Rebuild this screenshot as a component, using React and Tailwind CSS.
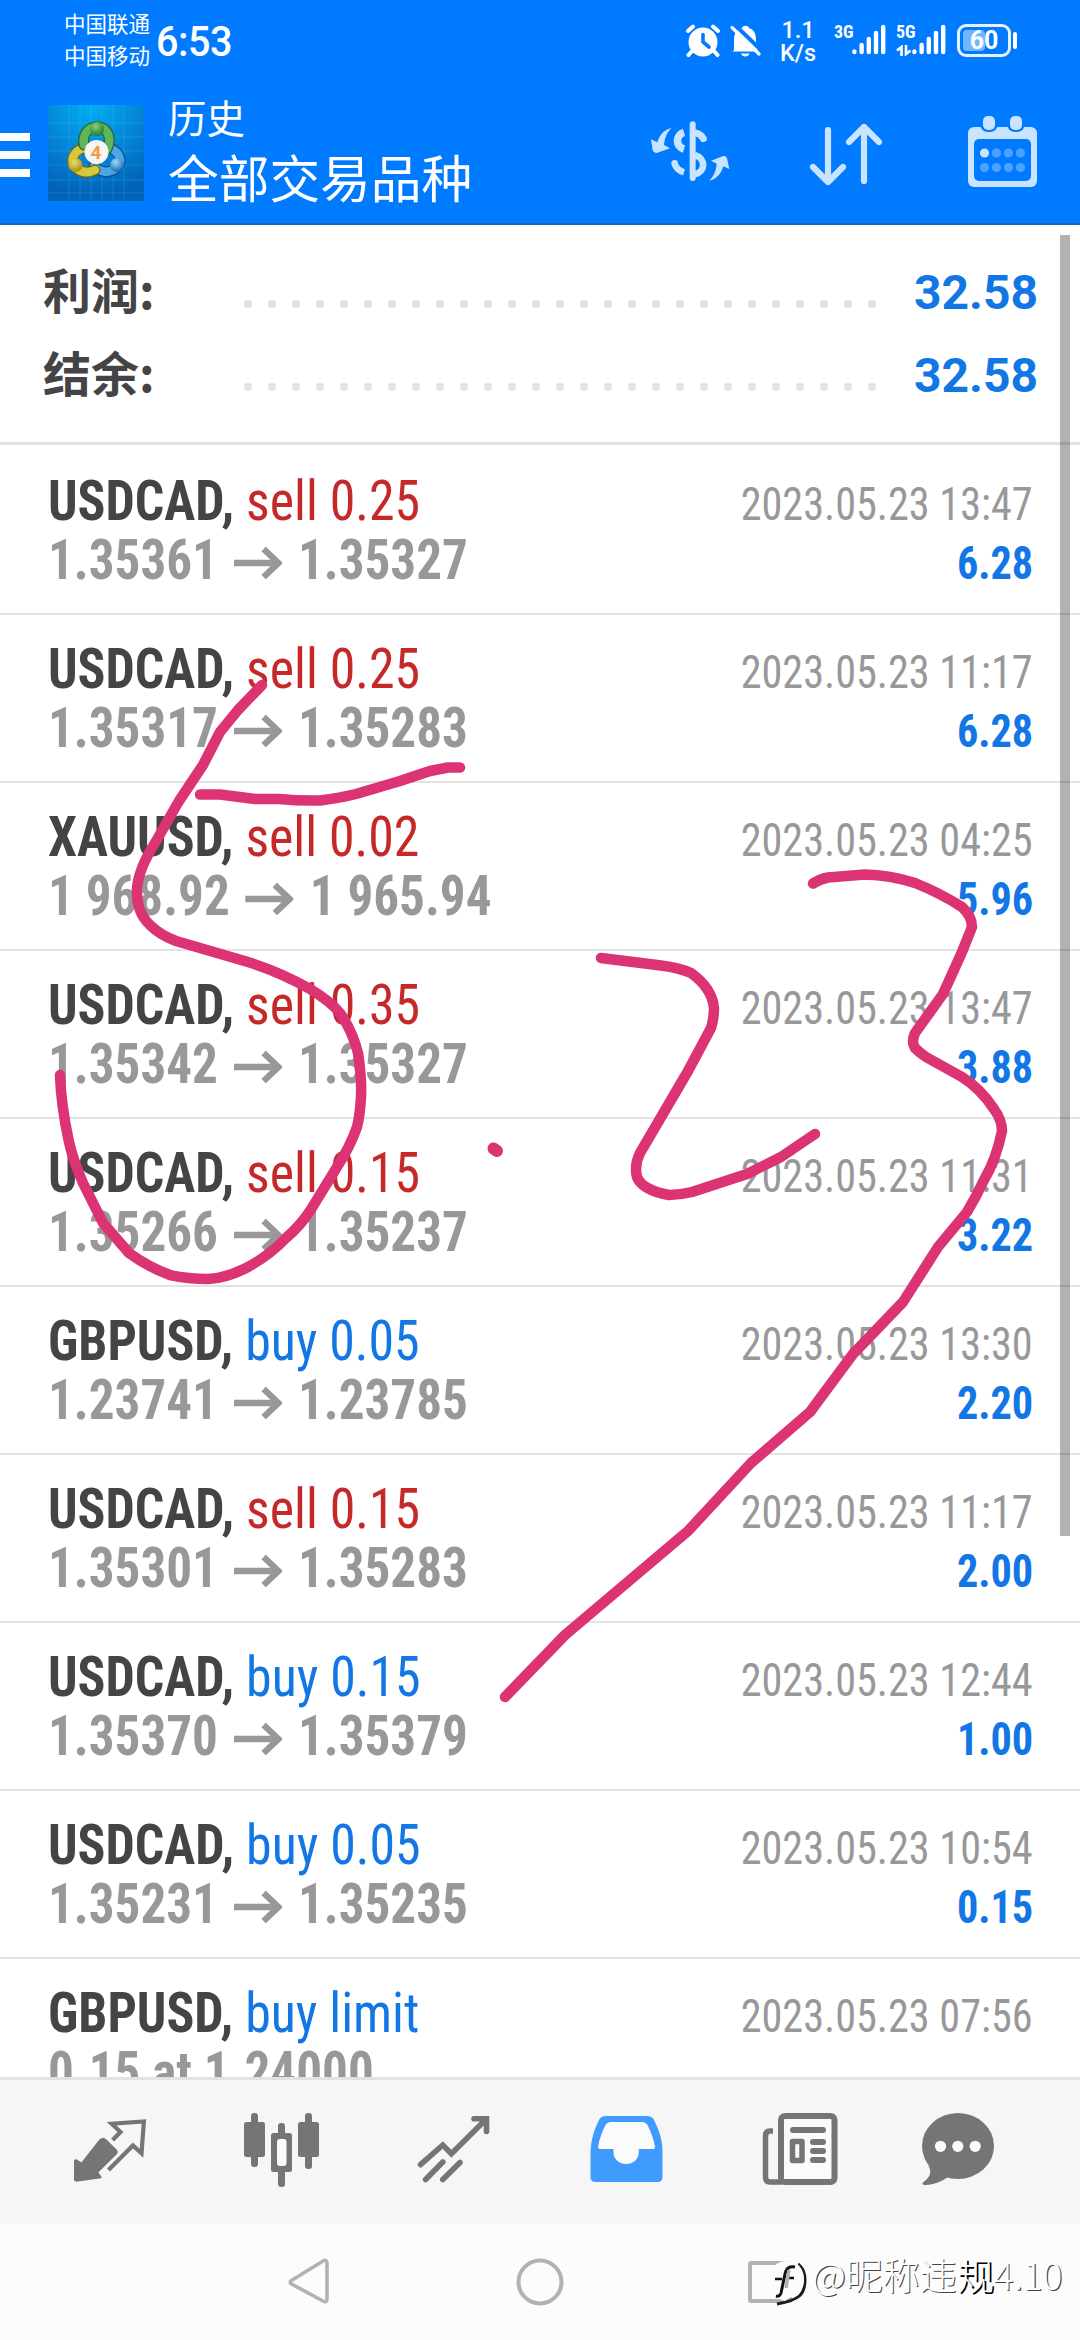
import React from "react";

const deals = [
  { symbol: "USDCAD", side: "sell", volume: "0.25", from: "1.35361", to: "1.35327", time: "2023.05.23 13:47", profit: "6.28" },
  { symbol: "USDCAD", side: "sell", volume: "0.25", from: "1.35317", to: "1.35283", time: "2023.05.23 11:17", profit: "6.28" },
  { symbol: "XAUUSD", side: "sell", volume: "0.02", from: "1 968.92", to: "1 965.94", time: "2023.05.23 04:25", profit: "5.96" },
  { symbol: "USDCAD", side: "sell", volume: "0.35", from: "1.35342", to: "1.35327", time: "2023.05.23 13:47", profit: "3.88" },
  { symbol: "USDCAD", side: "sell", volume: "0.15", from: "1.35266", to: "1.35237", time: "2023.05.23 11:31", profit: "3.22" },
  { symbol: "GBPUSD", side: "buy", volume: "0.05", from: "1.23741", to: "1.23785", time: "2023.05.23 13:30", profit: "2.20" },
  { symbol: "USDCAD", side: "sell", volume: "0.15", from: "1.35301", to: "1.35283", time: "2023.05.23 11:17", profit: "2.00" },
  { symbol: "USDCAD", side: "buy", volume: "0.15", from: "1.35370", to: "1.35379", time: "2023.05.23 12:44", profit: "1.00" },
  { symbol: "USDCAD", side: "buy", volume: "0.05", from: "1.35231", to: "1.35235", time: "2023.05.23 10:54", profit: "0.15" },
  { symbol: "GBPUSD", side: "buy", volume: "limit", note: "0.15 at 1.24000", time: "2023.05.23 07:56" },
];

const summary = [
  { label: "利润:", value: "32.58" },
  { label: "结余:", value: "32.58" },
];

function SignalBars() {
  return (
    <svg className="h-8 w-[34px]" viewBox="0 0 34 32" stroke="#fff" strokeWidth="4.4" strokeLinecap="round">
      <path d="M2.4 27.5v.5M9.6 21v7M16.8 15v13M24 9v19M31.2 3v25" />
    </svg>
  );
}

function StatusBar() {
  return (
    <div className="flex h-20 items-start pl-16 text-white">
      <div className="w-[88px] pt-[9px] text-[21.5px] leading-8 whitespace-nowrap">
        <div>中国联通</div>
        <div>中国移动</div>
      </div>
      <div className="ml-1 origin-left scale-x-[0.94] pt-[18px] text-[42px] leading-[48px] font-medium tracking-[-0.5px]">
        6:53
      </div>
      <div className="ml-auto flex h-20 pr-[63px]">
        <svg className="mt-6 h-[33px] w-[34px]" viewBox="0 0 34 33" fill="none">
          <circle cx="17" cy="18" r="14.5" fill="#fff" />
          <path d="M2 7 7 2.5M32 7l-5-4.500M6 27l-3.500 4M28 27l3.500 4" stroke="#fff" strokeWidth="4" strokeLinecap="round" />
          <path d="M17 10.500V18l6 5" stroke="#007aff" strokeWidth="3.600" strokeLinecap="round" />
        </svg>
        <svg className="mt-6 ml-2.5 h-[33px] w-[31px]" viewBox="0 0 31 33" fill="none">
          <path d="M4 26V16C4 9 7 5 12 4C13 1 18 1 19 4C24 6 26 9 26 16V22L28 26V27.500H2.500Z" fill="#fff" />
          <path d="M11 29.500h8.500c-1 4-7.500 4-8.500 0Z" fill="#fff" />
          <path d="m4 0 27 26" stroke="#007aff" strokeWidth="4" />
          <path d="m2 3.500 27 26.500" stroke="#fff" strokeWidth="3.200" strokeLinecap="round" />
        </svg>
        <div className="mt-[19px] ml-[18px] w-[38px] text-center text-[23.5px] leading-[23px] font-medium">
          <div>1.1</div>
          <div>K/s</div>
        </div>
        <div className="mt-6 ml-[17px] w-[19px] text-[18px] leading-[15px] font-[Roboto_Condensed] font-bold">
          3G
        </div>
        <div className="mt-6 -ml-px">
          <SignalBars />
        </div>
        <div className="mt-6 ml-2.5 w-4 text-[18px] leading-[15px] font-[Roboto_Condensed] font-bold">
          5G
          <svg className="mt-1.5 h-[11px] w-4" viewBox="0 0 16 11" fill="none" stroke="#fff" strokeWidth="2.600">
            <path d="M5.500 11V2L1 5.500M10 0v9l4.500-3.500" />
          </svg>
        </div>
        <div className="mt-6">
          <SignalBars />
        </div>
        <div className="relative mt-6 ml-[11px] flex h-[33px] w-[54px] items-center justify-center rounded-[9px] border-[3px] border-white/90">
          <span className="absolute top-[3px] left-[3px] h-[21px] w-[22px] rounded-sm bg-white/45" />
          <span className="relative text-[25px] leading-none font-bold">60</span>
        </div>
        <div className="mt-8 ml-0.5 h-[17px] w-1 rounded-full bg-white" />
      </div>
    </div>
  );
}

function AppLogo() {
  return (
    <svg className="h-24 w-24" viewBox="0 0 96 96" fill="none" strokeLinecap="round">
      <defs>
        <radialGradient id="sky" cx="45%" cy="0%" r="95%">
          <stop offset="0" stopColor="#00aef2" />
          <stop offset="0.55" stopColor="#0484d6" />
          <stop offset="1" stopColor="#0062b8" />
        </radialGradient>
        <radialGradient id="green" cx="40%" cy="30%" r="70%">
          <stop offset="0" stopColor="#8fcf72" />
          <stop offset="1" stopColor="#1f7c35" />
        </radialGradient>
        <radialGradient id="gold" cx="40%" cy="30%" r="70%">
          <stop offset="0" stopColor="#efe16a" />
          <stop offset="1" stopColor="#a88e10" />
        </radialGradient>
        <radialGradient id="blue" cx="40%" cy="30%" r="70%">
          <stop offset="0" stopColor="#9fdcfb" />
          <stop offset="1" stopColor="#1268b4" />
        </radialGradient>
      </defs>
      <path d="M0 0h96v96H0Z" fill="url(#sky)" />
      <path
        d="M21 0v96M32 0v96M43 0v96M54 0v96M65 0v96M76 0v96M0 18h96M0 32h96M0 46h96M0 60h96M0 75h96M0 88h96"
        stroke="#5cc8ff"
        strokeOpacity="0.22"
      />
      <path d="M62 43C73 48 75 58 68 63C60 69 52 67 46 61" stroke="#0d4f8c" strokeWidth="11" />
      <path d="M62 43C73 48 75 58 68 63C60 69 52 67 46 61" stroke="#4aa6e6" strokeWidth="8.500" />
      <path d="M36 43C25 46 21 56 28 63C34 68 41 68 47 65" stroke="#6f6a1c" strokeWidth="11" />
      <path d="M36 43C25 46 21 56 28 63C34 68 41 68 47 65" stroke="#d3c93c" strokeWidth="8.500" />
      <path d="M36 40C34 30 40 22 49 22C58 22 65 31 59 44" stroke="#1f6a33" strokeWidth="11" />
      <path d="M36 40C34 30 40 22 49 22C58 22 65 31 59 44" stroke="#62b45a" strokeWidth="8.500" />
      <circle cx="49" cy="24" r="7" fill="url(#green)" />
      <circle cx="27.500" cy="60" r="7" fill="url(#gold)" />
      <circle cx="69" cy="60" r="7" fill="url(#blue)" />
      <circle cx="48.500" cy="47" r="12" fill="#f7f5f2" />
      <text x="48" y="54" fontSize="19" fontWeight="700" fill="#ef9a4a" textAnchor="middle" fontFamily="Roboto">
        4
      </text>
    </svg>
  );
}

function AppBar() {
  return (
    <div className="flex h-[145px] items-start text-white">
      <div className="mt-[53px] flex w-[30px] flex-col gap-2.5">
        <span className="h-2 bg-white" />
        <span className="h-2 bg-white" />
        <span className="h-2 bg-white" />
      </div>
      <div className="mt-[25px] ml-[18px]">
        <AppLogo />
      </div>
      <div className="mt-[10px] ml-[24px] whitespace-nowrap">
        <div className="text-[38.5px] leading-[60px]">历史</div>
        <div className="text-[50.7px] leading-[62px]">全部交易品种</div>
      </div>
      <div className="ml-auto flex pr-[35px]">
        <svg className="mt-[25px] h-[90px] w-[110px]" viewBox="0 0 330 270" fill="none" stroke="#c8e4ff">
          <path d="M158 58V219" strokeWidth="18" strokeLinecap="round" />
          <path d="M132 82C106 90 106 124 132 132" strokeWidth="23" />
          <path d="M164 83C178 86 186 92 190 101" strokeWidth="21" strokeLinecap="round" />
          <path d="M164 150C198 160 198 200 164 208" strokeWidth="20" />
          <path d="M104 176C108 190 118 198 132 202" strokeWidth="20" />
          <circle cx="104" cy="175" r="5" strokeWidth="10" />
          <path d="M95 68C73 74 59 88 52 112L33 103 38 136Q41 145 50 144L90 130 72 120C74 98 81 82 95 68Z" fill="#c8e4ff" stroke="none" />
          <path d="M207 228C229 222 243 208 250 184L268 192 261 160Q258 151 250 153L213 167 230 176C228 198 221 214 207 228Z" fill="#c8e4ff" stroke="none" />
        </svg>
        <svg className="mt-[38px] ml-[55px] h-[70px] w-20" viewBox="0 0 80 70" fill="none" stroke="#c8e4ff" strokeWidth="6.200" strokeLinecap="round" strokeLinejoin="round">
          <path d="M23 12V63M8 49l15 15 15-15M59 63V9M44 24 59 9l15 15" />
        </svg>
        <svg className="mt-[34px] ml-[80px] h-[76px] w-20" viewBox="0 0 80 76" fill="none">
          <rect x="3" y="13" width="69" height="60" rx="6" fill="#c8e4ff" />
          <rect x="9" y="25" width="57" height="42" rx="5" fill="#007aff" />
          <rect x="15" y="-1" width="18" height="19" rx="8" fill="#007aff" />
          <rect x="42" y="-1" width="18" height="19" rx="8" fill="#007aff" />
          <rect x="18" y="2" width="12" height="14" rx="5" fill="#c8e4ff" />
          <rect x="45" y="2" width="12" height="14" rx="5" fill="#c8e4ff" />
          <circle cx="19.500" cy="39" r="4.600" fill="#c8e4ff" />
          <g fill="#4da2ff">
            <circle cx="31.500" cy="39" r="4.600" />
            <circle cx="43.500" cy="39" r="4.600" />
            <circle cx="55.500" cy="39" r="4.600" />
            <circle cx="19.500" cy="53.500" r="4.600" />
            <circle cx="31.500" cy="53.500" r="4.600" />
            <circle cx="43.500" cy="53.500" r="4.600" />
            <circle cx="55.500" cy="53.500" r="4.600" />
          </g>
        </svg>
      </div>
    </div>
  );
}

function SummaryRow({ label, value }) {
  return (
    <div className="flex h-[83px] items-center pr-[42px] pl-[43px] leading-[83px]">
      <div className="-mt-[7px] w-[201px] font-['Noto_Sans_CJK_SC',sans-serif] text-[48px] font-bold text-[#444446]">{label}</div>
      <div className="mt-[25px] flex w-[632px] justify-between">
        {Array.from({ length: 27 }, (_, i) => (
          <span key={i} className="size-2 rounded-full bg-[#e2e2e2]" />
        ))}
      </div>
      <div className="mt-0.5 ml-auto text-[48px] font-bold text-[#1277e4]">{value}</div>
    </div>
  );
}

function DealRow({ deal, first }) {
  return (
    <div
      className={`border-b-2 border-[#e2e2e2] pr-[47px] pl-12 whitespace-pre font-[Roboto_Condensed] text-[55px] leading-[59px] ${
        first ? "h-[170px] pt-[27px]" : "h-[168px] pt-[25px]"
      }`}
    >
      <div className="flex h-[59px] items-baseline justify-between">
        <div className="origin-left scale-x-[0.942]">
          <span className="font-bold text-[#444446]">{deal.symbol}, </span>
          <span className={deal.side === "sell" ? "font-[450] text-[#c62828]" : "font-[450] text-[#1277e4]"}>
            {deal.side} {deal.volume}
          </span>
        </div>
        <span className="origin-right scale-x-[0.928] text-[45.500px] text-[#98989a]">{deal.time}</span>
      </div>
      <div className="flex h-[59px] items-baseline justify-between font-bold text-[#98989a]">
        {deal.note ? (
          <div className="origin-left scale-x-[0.93]">{deal.note}</div>
        ) : (
          <div className="flex origin-left scale-x-[0.93] items-baseline">
            {deal.from}
            <svg className="mx-[17px] mb-[3px] h-8 w-[52px]" viewBox="0 0 49 32" preserveAspectRatio="none" fill="none" stroke="#98989a" strokeWidth="6.400">
              <path d="M0 16H45M30 2 45 16 30 30" />
            </svg>
            {deal.to}
          </div>
        )}
        <span className="origin-right scale-x-[0.928] text-[45.500px] text-[#1277e4]">{deal.profit}</span>
      </div>
    </div>
  );
}

function TabBar() {
  return (
    <div className="flex h-[147px] border-t-[3px] border-[#e2e2e2] bg-[#f6f6f6] pl-6">
      {/* quotes */}
      <svg className="h-[144px] w-[172px]" viewBox="0 0 172 144" fill="none">
        <path d="M52 80 57.500 83.500 76 60Q79 57 82 60L92 70Q94 72 92 74L73.500 92.300 77 97.500 52 101Z" fill="#757575" stroke="#757575" strokeWidth="1.500" strokeLinejoin="round" />
        <path d="M51 80.500V100L55 84Z" fill="#757575" stroke="#757575" strokeWidth="2" strokeLinejoin="round" />
        <path d="M88.600 60 96.500 52 87.600 43.700 119.900 41.500 117.500 73.300 108.900 65.500 84.500 90" stroke="#757575" strokeWidth="4.200" />
      </svg>
      {/* chart */}
      <svg className="h-[144px] w-[172px]" viewBox="0 0 172 144" fill="none">
        <g fill="#757575">
          <rect x="48" y="42" width="21" height="35" rx="2.500" />
          <rect x="55" y="33" width="7" height="54" rx="3" />
          <rect x="82" y="43" width="7" height="64" rx="3" />
          <rect x="75" y="53" width="21" height="39" rx="2.500" />
          <rect x="102" y="42" width="21" height="35" rx="2.500" />
          <rect x="109" y="33" width="7" height="56" rx="3" />
        </g>
        <rect x="81" y="59" width="9.500" height="27" rx="3" fill="#fbfbfb" />
      </svg>
      {/* trade */}
      <svg className="h-[144px] w-[172px]" viewBox="0 0 172 144" fill="none" stroke="#757575" strokeWidth="5.600" strokeLinecap="round">
        <path d="M52.500 84.700 74.800 65 83.400 73.700 118 39.300M106 38.700H118.500V51.500M74.800 82 57.600 99.500M92 82.500 74.800 99.500" />
      </svg>
      {/* history, the active tab */}
      <svg className="h-[144px] w-[172px]" viewBox="0 0 172 144" fill="none">
        <path d="M50.500 72C51 60 54 50 59 40Q61 36 66 36H107Q112 36 114 40C119 50 122.500 60 122.500 72V97Q122.500 102 117.500 102H55.500Q50.500 102 50.500 97Z" fill="#409bff" />
        <path d="M58 67C59 60 62 52 65 46Q67 42 71 42H102Q106 42 108 46C111 52 114 60 115 67Q115 69 113 69H98.800V72C98.800 88 73.500 88 73.500 72V69H60Q58 69 58 67Z" fill="#fbfbfb" />
      </svg>
      {/* news */}
      <svg className="h-[144px] w-[172px]" viewBox="0 0 172 144" fill="none" stroke="#757575">
        <path d="M61 51H58Q53.500 51 53.500 56V97Q53.500 102 58 102H70" strokeWidth="5.500" />
        <rect x="69" y="36" width="53.500" height="66" rx="4" fill="#fbfbfb" strokeWidth="6" />
        <path d="M81 50H111M101 62H111M101 71H111M101 80H111" strokeWidth="6" strokeLinecap="round" />
        <rect x="80.500" y="61.500" width="9.500" height="19" strokeWidth="5.500" strokeLinejoin="round" />
      </svg>
      {/* messages */}
      <svg className="h-[144px] w-[172px]" viewBox="0 0 172 144">
        <ellipse cx="74" cy="66" rx="36" ry="33" fill="#757575" />
        <path d="M44 85C49 93 45 98 38.500 103Q38 105 42 105C50 104.500 57 102 64 97Z" fill="#757575" />
        <g fill="#fbfbfb">
          <circle cx="56.500" cy="66.300" r="5.600" />
          <circle cx="73.800" cy="66.300" r="5.600" />
          <circle cx="91.200" cy="66.300" r="5.600" />
        </g>
      </svg>
    </div>
  );
}

function SystemNav() {
  return (
    <div className="relative flex h-[116px] bg-[#fcfcfc] pt-8">
      <svg className="ml-[284px] h-[52px] w-[50px]" viewBox="0 0 50 52" fill="none" stroke="#b2b2b2" strokeWidth="3.600" strokeLinejoin="round">
        <path d="M7.500 24.500 39 5Q43 3 43 7V43Q43 47 39 45L7.500 28Q5 26 7.500 24.500Z" />
      </svg>
      <svg className="ml-[180px] h-[52px] w-[52px]" viewBox="0 0 52 52" fill="none" stroke="#b2b2b2" strokeWidth="4">
        <circle cx="26" cy="26" r="21.500" />
      </svg>
      <div className="mt-[5px] ml-[182px] h-[42px] w-[44px] rounded-[3px] border-4 border-[#b2b2b2]" />
      {/* author stamp over the recents button */}
      <div className="absolute top-[25px] left-[768px] flex items-start">
        <svg className="mt-[9px] h-12 w-11" viewBox="0 0 44 48" fill="none">
          <path d="M9 46C32 42 37 36 37 22C37 14 34 9 30 6" stroke="#1c1c1c" strokeWidth="3" />
          <path d="M18 43C6 41 1 32 1 21C1 10 9 3 19 3C30 3 36 11 36 21C36 33 30 37 21 40Q17 42 18 43Z" fill="#fcfcfc" />
          <path d="M27 9Q19 7 17 16L13 35Q12 39 8 38" stroke="#111" strokeWidth="3" />
          <path d="M7 21H14M18 20H26" stroke="#111" strokeWidth="2.500" />
          <path d="M21 12 18 30" stroke="#b2b2b2" strokeWidth="3.500" />
        </svg>
        <span className="whitespace-nowrap font-['Noto_Sans_CJK_SC',sans-serif] text-[37px] leading-[50px] font-light text-white [text-shadow:1.200px_1.200px_0.500px_#444]">
          @昵称违<span className="[text-shadow:2px_2px_0.500px_#000]">规</span>4.10
        </span>
      </div>
    </div>
  );
}

// freehand "5.23" drawn over the list
function Doodle() {
  return (
    <svg
      className="pointer-events-none absolute top-0 left-0 h-[2340px] w-[1080px]"
      viewBox="0 0 1080 2340"
      fill="none"
      stroke="#db3374"
      strokeWidth="10.500"
      strokeLinecap="round"
      strokeLinejoin="round"
    >
      <path d="M262 685 238 710 220 732 203 765 179 801 155 843Q139 868 137 888Q136 912 150 925Q160 935 176 941L248 962Q280 972 310 989Q330 1001 340 1013Q352 1030 358 1053Q362 1080 361 1097Q360 1115 357 1127Q350 1147 337 1167L310 1211Q300 1226 286 1238Q268 1257 244 1269Q226 1278 208 1279Q188 1279 170 1275Q148 1267 129 1253L103 1223 83 1183Q73 1160 69 1142Q61 1105 60 1075" />
      <path d="M200 794.500H220L255 799H279Q300 801 320 800.500Q340 798 356 794L400 781 430 771 448 767.500H460" />
      <path d="M493.500 1148.500 497 1151" strokeWidth="12" />
      <path d="M601 958 661 965.500Q680 968 691 973Q712 988 714 1008Q714 1018 711 1028L688 1071 657 1124 640 1153Q634 1165 637 1177Q642 1190 669 1195Q680 1195 692 1192L747 1174 781 1157 815 1134" />
      <path d="M813 883.500Q820 879 828 877.500L865 874.500Q890 875 915 883Q940 893 962 907Q972 916 972 927L962 952 943 994 915 1033Q911 1042 915 1048Q920 1053 926 1057L962 1077Q980 1088 994 1109Q1002 1120 1002 1131Q996 1160 984 1180Q976 1197 967 1212L938 1247 903 1302 879 1327 853 1354 810 1412 751 1463 688 1531 565 1635 505 1697" />
    </svg>
  );
}

export default function App() {
  return (
    <div className="relative h-[2340px] w-[1080px] overflow-hidden bg-white font-[Roboto,'Noto_Sans_CJK_SC',sans-serif]">
      <div className="h-[225px] border-b-2 border-[#1668b8] bg-[#007aff]">
        <StatusBar />
        <AppBar />
      </div>
      <div className="relative h-[1852px] overflow-hidden">
        <div className="h-[220px] border-b-[3px] border-[#e2e2e2] pt-[25px]">
          {summary.map((row) => (
            <SummaryRow key={row.label} {...row} />
          ))}
        </div>
        {deals.map((deal, i) => (
          <DealRow key={i} deal={deal} first={i === 0} />
        ))}
        <div className="absolute top-[10px] right-[10px] h-[1301px] w-2.5 bg-black/30" />
      </div>
      <TabBar />
      <SystemNav />
      <Doodle />
    </div>
  );
}
